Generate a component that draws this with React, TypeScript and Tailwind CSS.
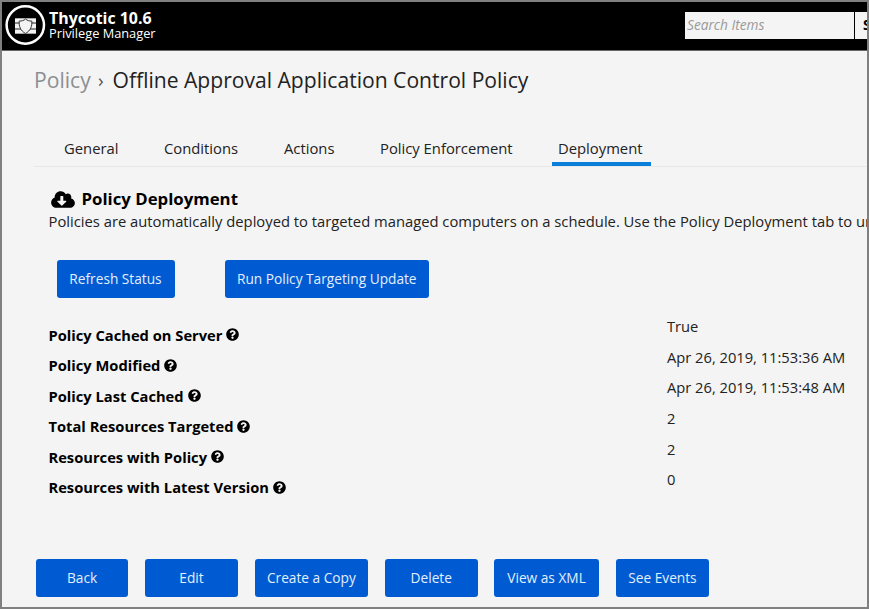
import { FaCloudDownloadAlt, FaQuestionCircle } from "react-icons/fa";

const tabs = [
  { label: "General", style: "w-[100px] pl-[30px]" },
  { label: "Conditions", style: "w-[120px] pl-[30px]" },
  { label: "Actions", style: "w-[96px] pl-[30px]" },
  { label: "Policy Enforcement", style: "w-[202px] pl-[30px]" },
];

const labels = [
  "Policy Cached on Server",
  "Policy Modified",
  "Policy Last Cached",
  "Total Resources Targeted",
  "Resources with Policy",
  "Resources with Latest Version",
];

const values = ["True", "Apr 26, 2019, 11:53:36 AM", "Apr 26, 2019, 11:53:48 AM", "2", "2", "0"];

const actions = [
  { label: "Back", width: "w-[92.6px]" },
  { label: "Edit", width: "w-[92.6px]" },
  { label: "Create a Copy", width: "w-[113.6px]" },
  { label: "Delete", width: "w-[92.6px]" },
  { label: "View as XML", width: "w-[104.4px]" },
  { label: "See Events", width: "w-[93.8px]" },
];

function Button({ label, width }: { label: string; width: string }) {
  return (
    <button className={`${width} h-[38px] shrink-0 rounded-[3px] bg-[#005bd3] pt-px text-[13.7px] whitespace-nowrap text-[#e4effc]`}>
      {label}
    </button>
  );
}

function Logo() {
  return (
    <svg width="42" height="42" viewBox="0 0 42 42" fill="none" className="shrink-0">
      <circle cx="21.3" cy="21" r="18.7" stroke="#fff" strokeWidth="2.5" />
      <path d="M11 14.300h21v15.400h-21z" fill="#f3f3f3" />
      <path d="M10.500 19h22M10.500 25h22" stroke="#222" strokeWidth="1.1" />
      <path d="M21.500 15c1.700 1.500 3.700 2.100 6.300 2.100.5 5-1.300 9.600-6.300 12.400-5-2.800-6.800-7.400-6.300-12.400 2.600 0 4.600-.6 6.300-2.100z" fill="#f3f3f3" stroke="#333" strokeWidth="1" />
    </svg>
  );
}

export default function App() {
  return (
    <div className="flex h-[609px] w-[869px] flex-col overflow-hidden border-2 border-[#808080] bg-[#f4f4f4] font-['Open_Sans',sans-serif] text-[#222]">
      <header className="flex h-[49px] shrink-0 justify-between border-b border-[#666] bg-black">
        <div className="flex pt-[2px] pl-[2px]">
          <Logo />
          <div className="pt-[5px] pl-[3px] text-white">
            <div className="text-[15.9px] leading-[18px] font-bold">Thycotic 10.6</div>
            <div className="text-[12.8px] leading-[12px]">Privilege Manager</div>
          </div>
        </div>
        <div className="flex pt-[10px]">
          <div className="h-[27px] w-[169px] bg-[#f4f4f4] pl-[2px] text-[13.7px] leading-[26px] text-[#999] italic">Search Items</div>
          <div className="ml-px h-[27px] w-[12px] overflow-hidden bg-[#f4f4f4] pl-[8px] text-[13.6px] leading-[26px] font-bold text-black">Search</div>
        </div>
      </header>

      <h1 className="flex h-[58px] shrink-0 items-center pl-[32px] text-[21.1px] whitespace-nowrap">
        <span className="w-[57px] text-[#8c8f92]">Policy</span>
        <span className="w-[21.5px] pl-[7px] text-[19px] text-[#555]">›</span>
        <span>Offline Approval Application Control Policy</span>
      </h1>

      <nav className="mt-[22px] ml-[32px] flex h-[36px] shrink-0 border-b border-[#e8e8e8] text-[14.8px] whitespace-nowrap">
        {tabs.map((tab) => (
          <div key={tab.label} className={`${tab.style} pt-[6px] leading-[22px]`}>{tab.label}</div>
        ))}
        <div className="h-[35px] w-[99px] border-b-4 border-[#0a7fd9] pt-[6px] pl-[6px] leading-[22px]">Deployment</div>
      </nav>

      <section className="flex shrink-0 flex-col pt-[21px] pl-[46.5px] whitespace-nowrap">
        <h2 className="flex h-[22px] items-center text-[16.8px] font-bold text-black">
          <FaCloudDownloadAlt className="mr-[6.5px] ml-[2.5px] h-[19px] w-[24px]" />
          Policy Deployment
        </h2>
        <p className="h-[25px] text-[14.77px] leading-[22px]">
          Policies are automatically deployed to targeted managed computers on a schedule. Use the Policy Deployment tab to understand
        </p>
      </section>

      <div className="mt-[25px] flex shrink-0 gap-[50px] pl-[54.5px]">
        <Button label="Refresh Status" width="w-[118px]" />
        <Button label="Run Policy Targeting Update" width="w-[204.5px]" />
      </div>

      <div className="flex h-[214px] shrink-0 whitespace-nowrap">
        <div className="w-[618px] pt-[21.5px] pl-[46.5px] text-[14.7px] font-bold text-black">
          {labels.map((label) => (
            <div key={label} className="flex h-[30.5px] items-center gap-[4px]">
              {label}
              <FaQuestionCircle className="size-[13px]" />
            </div>
          ))}
        </div>
        <div className="pt-[13px] pl-[47px] text-[14.7px]">
          {values.map((value, i) => (
            <div key={i} className="flex h-[30.6px] items-center">{value}</div>
          ))}
        </div>
      </div>

      <footer className="mt-[47px] flex shrink-0 gap-[16.8px] pl-[33.8px]">
        {actions.map((action) => (
          <Button key={action.label} {...action} />
        ))}
      </footer>
    </div>
  );
}
